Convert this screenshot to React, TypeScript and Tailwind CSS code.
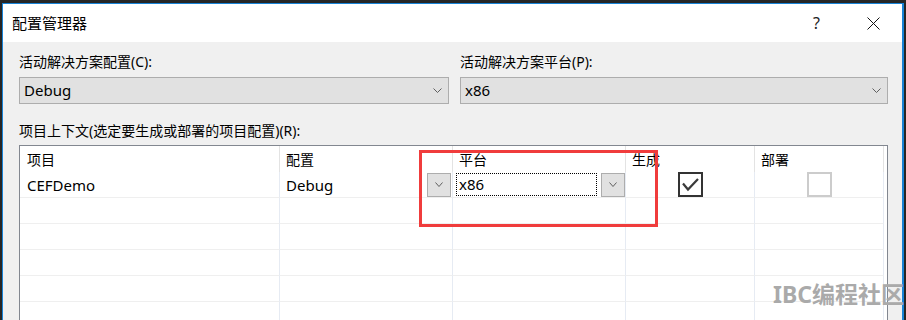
import React from 'react';

const Chevron = ({ w = 9, h = 5 }: { w?: number; h?: number }) => (
  <svg width={w} height={h} viewBox={`0 0 ${w} ${h}`}>
    <path d={`M0.5 0.5 L${w / 2} ${h - 0.5} L${w - 0.5} 0.5`} fill="none" stroke="#5f5f5f" strokeWidth="1" />
  </svg>
);

const Combo = ({ value }: { value: string }) => (
  <div className="mt-[5px] h-[27px] border border-[#adadad] bg-[#e1e1e1] flex items-center justify-between pl-[4px] pr-[6px] text-[15px] text-black">
    <span>{value}</span>
    <Chevron />
  </div>
);

const DropButton = () => (
  <div className="w-[24px] h-[24px] shrink-0 border border-[#adadad] bg-[#e1e1e1] flex items-center justify-center">
    <Chevron w={8} h={5} />
  </div>
);

const headers = ['项目', '配置', '平台', '生成', '部署'];

export default function App() {
  const emptyRows = [0, 1, 2, 3, 4];
  const cell = 'h-[26px] border-r border-r-[#e6ebf3] border-b border-b-[#efefef]';

  return (
    <div className="relative w-[906px] h-[320px] overflow-hidden bg-[#262626] pl-[2px] pt-[3px] pr-[2px] font-['Noto_Sans','Noto_Sans_CJK_SC',sans-serif] text-black">
      <div className="h-full flex flex-col border-l border-t border-r-2 border-[#1883d7] bg-[#f0f0f0]">
        {/* title bar */}
        <div className="h-[38px] shrink-0 bg-white flex items-center pl-[9px]">
          <span className="text-[15px]">配置管理器</span>
          <span className="ml-auto mr-[47px] text-[16px] text-[#222]">?</span>
          <svg width="13" height="13" viewBox="0 0 13 13" className="mr-[22px]">
            <path d="M0.5 0.5 L12.5 12.5 M12.5 0.5 L0.5 12.5" stroke="#111" strokeWidth="1" />
          </svg>
        </div>

        {/* body */}
        <div className="flex-1 pl-[16px] pr-[14px] pt-[10px]">
          <div className="grid grid-cols-[430px_428px] gap-x-[11px]">
            <div>
              <div className="h-[20px] leading-[20px] text-[14px]">活动解决方案配置(C):</div>
              <Combo value="Debug" />
            </div>
            <div>
              <div className="h-[20px] leading-[20px] text-[14px]">活动解决方案平台(P):</div>
              <Combo value="x86" />
            </div>
          </div>

          <div className="mt-[17px] h-[20px] leading-[20px] text-[14px]">项目上下文(选定要生成或部署的项目配置)(R):</div>

          <div className="mt-[4px] h-[200px] border border-[#828790] bg-white">
            <div className="grid grid-cols-[260px_173px_173px_129px_129px]">
              {headers.map((h, i) => (
                <div
                  key={h}
                  className={`h-[26px] border-r border-r-[#e3e3e3] flex items-center text-[14px] ${i === 0 ? 'pl-[7px]' : 'pl-[6px]'}`}
                >
                  {h}
                </div>
              ))}

              {/* first data row */}
              <div className={`${cell} flex items-center pl-[7px] pt-[2px] text-[15px]`}>CEFDemo</div>
              <div className={`${cell} flex items-center justify-between pl-[6px] pr-[1px] text-[15px]`}>
                <span className="pt-[2px]">Debug</span>
                <DropButton />
              </div>
              <div className={`${cell} flex items-center gap-[4px] pl-[3px] text-[15px]`}>
                <div className="flex-1 h-[23px] border border-dotted border-black flex items-center pl-[2px]">x86</div>
                <DropButton />
              </div>
              <div className={`${cell} flex items-center justify-center`}>
                <div className="w-[25px] h-[25px] border-2 border-[#333] bg-white flex items-center justify-center">
                  <svg width="21" height="21" viewBox="0 0 21 21">
                    <path d="M3 9.5 L8 15.5 L18 5" fill="none" stroke="#3a3a3a" strokeWidth="2.2" />
                  </svg>
                </div>
              </div>
              <div className={`${cell} flex items-center justify-center`}>
                <div className="w-[25px] h-[25px] border-2 border-[#cccccc] bg-white" />
              </div>

              {emptyRows.map((r) =>
                headers.map((h) => <div key={`${r}-${h}`} className={cell} />)
              )}
            </div>
          </div>
        </div>
      </div>

      {/* annotation box */}
      <div className="absolute left-[419px] top-[150px] w-[239px] h-[77px] border-[3px] border-[#f03c3c]" />

      {/* watermark */}
      <div className="absolute left-[773px] top-[278px] text-[23px] font-bold leading-[32px] text-[#aaaaaa] font-['Noto_Sans','Noto_Sans_CJK_SC',sans-serif]">
        IBC编程社区
      </div>
    </div>
  );
}
